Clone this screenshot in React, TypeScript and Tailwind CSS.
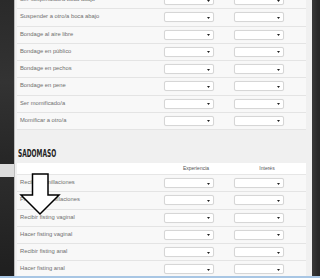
import React from "react";

const topRows = [
  "Ser suspendido/a boca abajo",
  "Suspender a otro/a boca abajo",
  "Bondage al aire libre",
  "Bondage en público",
  "Bondage en pechos",
  "Bondage en pene",
  "Ser momificado/a",
  "Momificar a otro/a",
];

const smRows = [
  "Recibir humillaciones",
  "Provocar humillaciones",
  "Recibir fisting vaginal",
  "Hacer fisting vaginal",
  "Recibir fisting anal",
  "Hacer fisting anal",
];

function Sel() {
  return (
    <div className="relative w-[50px] h-[10px] bg-white border border-[#d6d6d6] rounded-[2px] shadow-[0_0_1px_rgba(0,0,0,0.08)]">
      <svg className="absolute right-[3px] top-[3.5px]" width="3" height="2" viewBox="0 0 3 2">
        <polygon points="0,0 3,0 1.5,2" fill="#222" />
      </svg>
    </div>
  );
}

function Row({ label }: { label: string }) {
  return (
    <div className="flex items-center h-[17.25px] border-b border-[#e4e4e4] bg-[#f8f8f8] box-border shrink-0">
      <div className="w-[147px] pl-[3px] text-[5.8px] leading-none text-[#6e6e6e] whitespace-nowrap">{label}</div>
      <div className="w-[70px]">
        <Sel />
      </div>
      <div className="w-[70px]">
        <Sel />
      </div>
    </div>
  );
}

export default function App() {
  return (
    <div
      className="relative w-[320px] h-[278px] overflow-hidden flex flex-col bg-[#2b2b2b]"
      style={{ fontFamily: '"Liberation Sans", Arial, sans-serif' }}
    >
      <div className="flex flex-1 min-h-0">
        <div className="w-[14px] flex flex-col shrink-0">
          <div className="h-[164px] bg-gradient-to-b from-[#2a2a2a] via-[#333] to-[#262626]" />
          <div className="h-[13px] bg-[#dcdcdc]" />
          <div className="flex-1 bg-gradient-to-b from-[#2c2c2c] to-[#1f1f1f]" />
        </div>
        <div className="flex-1 bg-[#f0f0f0] pl-[2px] pr-[6px] flex flex-col border-l border-[#bdbdbd]">
          <div className="mt-[-8px] flex flex-col">
            {topRows.map((r) => (
              <Row key={r} label={r} />
            ))}
          </div>
          <div className="h-[33px] flex items-end pb-[5px] pl-[1px] shrink-0">
            <div
              className="text-[10.5px] leading-none font-bold text-[#1e1e1e] origin-left scale-x-[0.62]"
              style={{ fontFamily: '"DejaVu Sans Condensed", "Liberation Sans Narrow", sans-serif' }}
            >
              SADOMASO
            </div>
          </div>
          <div className="flex items-center h-[12px] bg-white border-b border-[#e6e6e6] shrink-0 text-[5px] text-[#555]">
            <div className="w-[147px]" />
            <div className="w-[64px] text-center">Experiencia</div>
            <div className="w-[78px] text-center">Interés</div>
          </div>
          <div className="flex flex-col">
            {smRows.map((r) => (
              <Row key={r} label={r} />
            ))}
          </div>
        </div>
        <div className="w-[11px] shrink-0 bg-gradient-to-r from-[#3a3a3a] via-[#2a2a2a] to-[#242424]" />
      </div>
      <div className="h-[2px] shrink-0 bg-[#a8c6e4]" />
      <svg className="absolute left-0 top-0" width="320" height="278" viewBox="0 0 320 278">
        <polygon
          points="32.5,174 48,174 48,195 59,195 40,214 21,195 32.5,195"
          fill="white"
          stroke="black"
          strokeWidth="1.5"
          strokeLinejoin="miter"
        />
      </svg>
    </div>
  );
}
